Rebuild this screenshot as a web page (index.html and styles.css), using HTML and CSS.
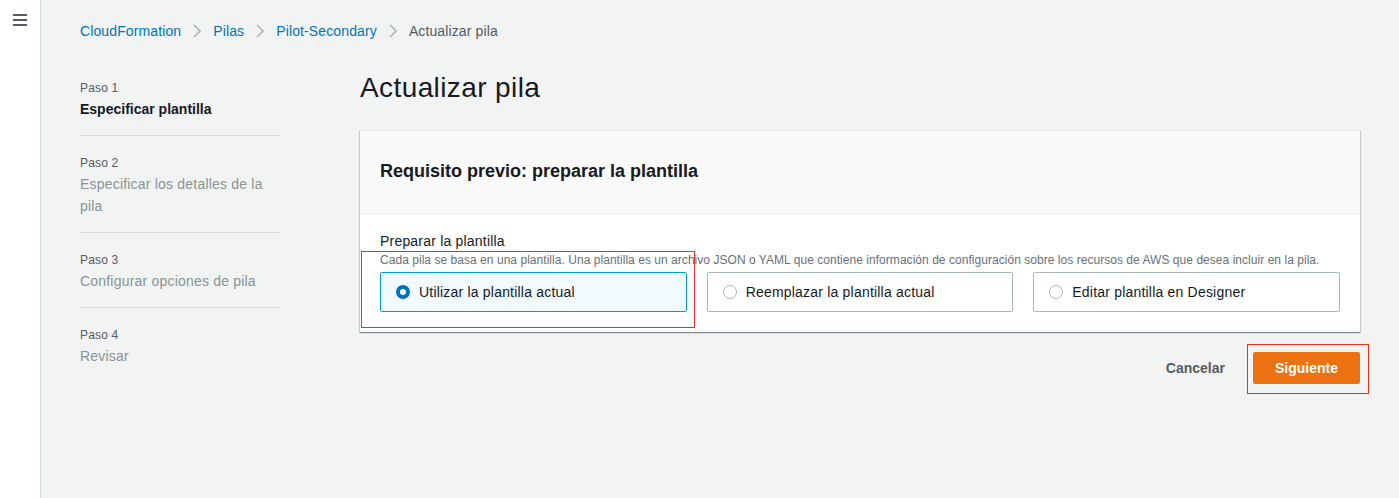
FILE: index.html
```html
<!DOCTYPE html>
<html lang="es">
<head>
<meta charset="utf-8">
<title>Actualizar pila</title>
<link rel="stylesheet" href="styles.css">
</head>
<body>
<div class="app">
  <aside class="navstrip">
    <button class="menu" aria-label="Menú">
      <svg width="14" height="12" viewBox="0 0 14 12"><rect x="0" y="0" width="14" height="2" fill="#545b64"/><rect x="0" y="5" width="14" height="2" fill="#545b64"/><rect x="0" y="10" width="14" height="2" fill="#545b64"/></svg>
    </button>
  </aside>
  <main class="main">
    <nav class="breadcrumbs">
      <a class="crumb" href="#">CloudFormation</a>
      <span class="sep"><svg width="8" height="14" viewBox="0 0 8 14"><path d="M1 1 L7 7 L1 13" fill="none" stroke="#aab7b8" stroke-width="1.6"/></svg></span>
      <a class="crumb" href="#">Pilas</a>
      <span class="sep"><svg width="8" height="14" viewBox="0 0 8 14"><path d="M1 1 L7 7 L1 13" fill="none" stroke="#aab7b8" stroke-width="1.6"/></svg></span>
      <a class="crumb" href="#">Pilot-Secondary</a>
      <span class="sep"><svg width="8" height="14" viewBox="0 0 8 14"><path d="M1 1 L7 7 L1 13" fill="none" stroke="#aab7b8" stroke-width="1.6"/></svg></span>
      <span class="crumb current">Actualizar pila</span>
    </nav>
    <div class="layout">
      <ol class="steps">
        <li class="step active">
          <div class="step-num">Paso 1</div>
          <div class="step-title">Especificar plantilla</div>
        </li>
        <li class="step">
          <div class="step-num">Paso 2</div>
          <div class="step-title">Especificar los detalles de la pila</div>
        </li>
        <li class="step">
          <div class="step-num">Paso 3</div>
          <div class="step-title">Configurar opciones de pila</div>
        </li>
        <li class="step last">
          <div class="step-num">Paso 4</div>
          <div class="step-title">Revisar</div>
        </li>
      </ol>
      <section class="content">
        <h1 class="page-title">Actualizar pila</h1>
        <div class="panel">
          <div class="panel-header">
            <h2>Requisito previo: preparar la plantilla</h2>
          </div>
          <div class="panel-body">
            <div class="field-label">Preparar la plantilla</div>
            <div class="field-desc">Cada pila se basa en una plantilla. Una plantilla es un archivo JSON o YAML que contiene información de configuración sobre los recursos de AWS que desea incluir en la pila.</div>
            <div class="tiles">
              <label class="tile selected"><span class="radio on"></span><span>Utilizar la plantilla actual</span></label>
              <label class="tile"><span class="radio"></span><span>Reemplazar la plantilla actual</span></label>
              <label class="tile"><span class="radio"></span><span>Editar plantilla en Designer</span></label>
            </div>
          </div>
          <div class="annot annot-tile"></div>
        </div>
        <div class="actions">
          <button class="btn-link">Cancelar</button>
          <div class="primary-wrap">
            <button class="btn-primary">Siguiente</button>
            <div class="annot annot-btn"></div>
          </div>
        </div>
      </section>
    </div>
  </main>
</div>
</body>
</html>
```

FILE: styles.css
```css
* { box-sizing: border-box; }
html, body { margin: 0; padding: 0; }
body {
  font-family: "Liberation Sans", Arial, sans-serif;
  color: #16191f;
  background: #f2f3f3;
  font-size: 14px;
  line-height: 22px;
}
.app { display: flex; height: 498px; }
.navstrip {
  width: 41px;
  flex: none;
  background: #ffffff;
  border-right: 1px solid #d5dbdb;
  padding-top: 14px;
}
.menu {
  border: 0; background: transparent; padding: 0; margin-left: 13px;
  display: block; width: 14px; height: 12px;
}
.menu svg { display: block; }
.main { flex: 1; padding: 21px 39px 0 39px; }
.breadcrumbs { display: flex; align-items: center; height: 20px; line-height: 20px; }
.crumb { color: #0073bb; text-decoration: none; font-size: 14px; letter-spacing: 0.12px; }
.crumb.current { color: #545b64; }
.sep { width: 32px; display: flex; justify-content: center; align-items: center; }
.sep svg { display: block; }
.layout { display: flex; gap: 80px; padding-top: 29px; }
.steps { list-style: none; margin: 10px 0 0; padding: 0; width: 200px; flex: none; }
.step { border-bottom: 1px solid #d5dbdb; padding: 19px 0 15px; }
.step:first-child { padding-top: 0; }
.step.last { border-bottom: 0; }
.step-num { font-size: 12px; line-height: 16px; color: #545b64; margin-bottom: 2px; letter-spacing: 0.15px; }
.step-title { font-size: 14px; line-height: 22px; color: #879596; letter-spacing: 0.2px; }
.step.active .step-title { color: #16191f; font-weight: 700; letter-spacing: 0; }
.content { flex: 1; min-width: 0; }
.page-title { margin: 0 0 24px; font-size: 28px; line-height: 36px; font-weight: 400; color: #16191f; letter-spacing: 0.4px; }
.panel {
  position: relative;
  background: #ffffff;
  box-shadow: 0 1px 1px 0 rgba(0,28,36,.3), 1px 1px 1px 0 rgba(0,28,36,.15), -1px 1px 1px 0 rgba(0,28,36,.15);
  border-top: 1px solid #eaeded;
}
.panel-header { background: #fafafa; border-bottom: 1px solid #eaeded; padding: 29px 20px 31px; }
.panel-header h2 { margin: 0; font-size: 18px; line-height: 22px; font-weight: 700; }
.panel-body { padding: 16px 20px 20px; }
.field-label { font-size: 14px; line-height: 22px; color: #16191f; letter-spacing: 0.2px; }
.field-desc { font-size: 12px; line-height: 16px; color: #687078; letter-spacing: 0.04px; }
.tiles { display: grid; grid-template-columns: repeat(3, 1fr); gap: 20px; margin-top: 4px; }
.tile {
  display: flex; align-items: center; gap: 9px;
  height: 40px; padding: 0 15px;
  border: 1px solid #aab7b8; border-radius: 2px; background: #fff;
  font-size: 14px; color: #16191f; letter-spacing: 0.2px;
}
.tile.selected { border-color: #00a1c9; background: #f1faff; }
.radio {
  width: 14px; height: 14px; border-radius: 50%;
  border: 1px solid #aab7b8; background: #fff; flex: none;
}
.radio.on { border: 4.5px solid #0073bb; background: #fff; }
.actions { display: flex; justify-content: flex-end; align-items: center; margin-top: 20px; gap: 8px; }
.btn-link {
  border: 0; background: transparent; font-family: inherit;
  font-size: 14px; font-weight: 700; color: #545b64; padding: 4px 20px; line-height: 22px;
}
.primary-wrap { position: relative; }
.btn-primary {
  display: block; border: 0; border-radius: 2px; background: #ec7211; color: #fff;
  font-family: inherit; font-size: 14px; font-weight: 700; line-height: 22px;
  width: 107px; height: 32px; padding: 0;
}
.annot { position: absolute; border: 1px solid #ee2f17; pointer-events: none; }
.annot-tile { left: 1px; top: 120px; width: 334px; height: 77px; }
.annot-btn { left: -6px; top: -8px; width: 122px; height: 50px; }
```
